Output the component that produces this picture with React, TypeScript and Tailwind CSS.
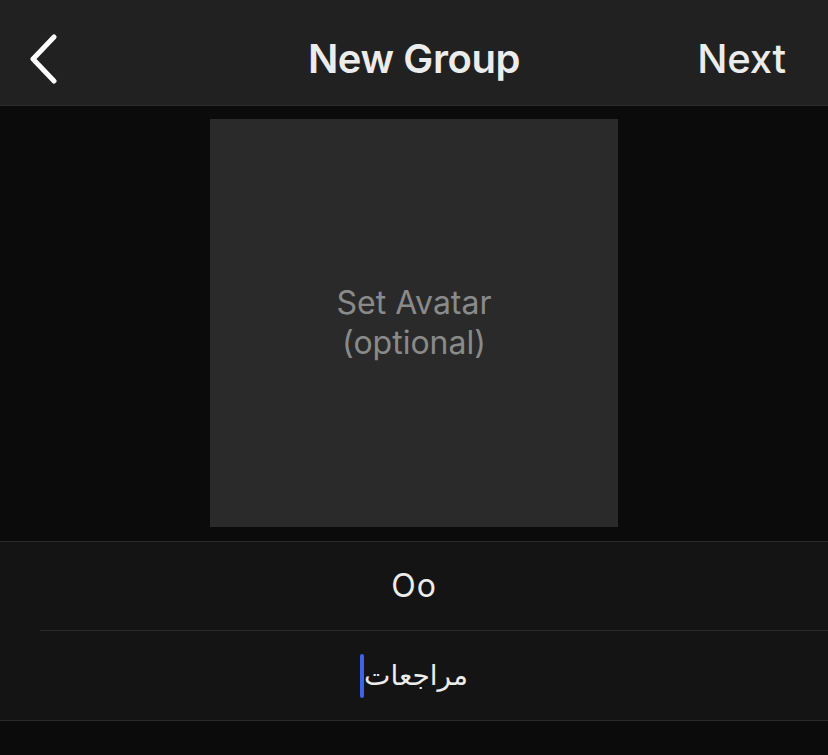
export default function App() {
  return (
    <div className="w-[828px] h-[755px] bg-[#0b0b0b] flex flex-col overflow-hidden" style={{ fontFamily: 'Inter, "DejaVu Sans", sans-serif' }}>
      <header className="h-[106px] shrink-0 bg-[#212121] border-b border-[#2c2c2c] flex items-center pl-[22px] pt-[13px] relative">
        <button className="w-[40px] h-[50px] flex items-center justify-center">
          <svg width="32" height="50" viewBox="0 0 32 50" fill="none">
            <path d="M28 3 L7 25 L28 47" stroke="#ffffff" strokeWidth="5" strokeLinecap="round" strokeLinejoin="round" />
          </svg>
        </button>
        <h1 className="absolute left-1/2 -translate-x-1/2 text-[40px] font-semibold text-[#ececec] tracking-[-0.4px]">New Group</h1>
        <span className="ml-auto pr-[42px] text-[40px] font-medium text-[#ececec] tracking-[-0.2px]">Next</span>
      </header>

      <div className="flex justify-center pt-[13px] pb-[14px]">
        <div className="w-[408px] h-[408px] bg-[#2a2a2a] flex flex-col items-center justify-center text-[32px] leading-[40px] text-[#8a8a8a]">
          <span>Set Avatar</span>
          <span>(optional)</span>
        </div>
      </div>

      <div className="border-t border-b border-[#2a2a2a] bg-[#141414]">
        <div className="h-[88px] flex items-center justify-center text-[32px] text-[#ececec] tracking-[1px]">Oo</div>
        <div className="ml-[40px] border-t border-[#2a2a2a]" />
        <div className="h-[89px] flex items-center justify-center">
          <span className="w-[4px] h-[44px] bg-[#3d63e8] rounded-sm" />
          <span dir="rtl" className="text-[28px] text-[#ececec]" style={{ fontFamily: '"DejaVu Sans", sans-serif' }}>مراجعات</span>
        </div>
      </div>
    </div>
  );
}
